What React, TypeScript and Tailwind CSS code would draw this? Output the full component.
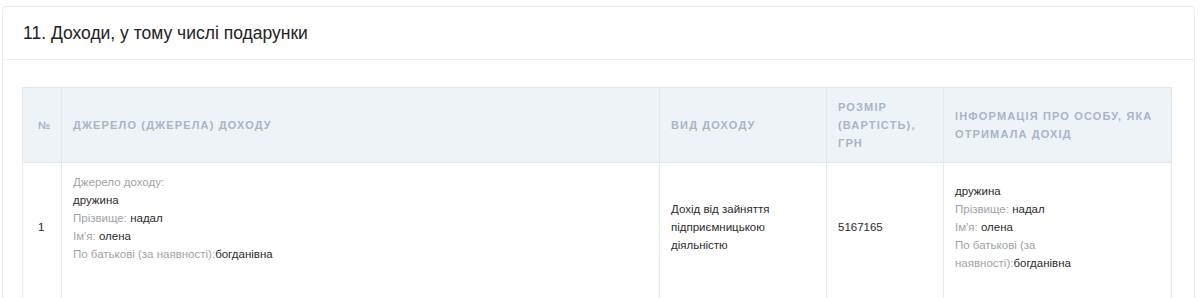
import React from 'react'

const font = { fontFamily: '"Liberation Sans", Arial, sans-serif' }

const Label = ({ children }: { children: React.ReactNode }) => (
    <span className="text-[#9ea3a8]">{children}</span>
)

const Value = ({ children }: { children: React.ReactNode }) => (
    <span className="text-[#2b2b2b]">{children}</span>
)

const headCls = 'px-[11px] py-[10px] text-left align-middle font-bold uppercase text-[11px] leading-[18px] tracking-[1.15px] text-[#a9b5c6] border-l border-[#e1e7ee]'
const cellCls = 'px-[11px] pt-[10px] pb-[30px] align-middle text-[11.5px] leading-[18px] text-[#2b2b2b] border-l border-[#e6eaef]'

const App = () => {
    return (
        <div className="bg-white w-[1200px] h-[298px] overflow-hidden pt-[6px] pl-[2px] pr-[5px]" style={font}>
            <div className="border border-[#ececec] rounded-[4px] bg-white">
                <div className="h-[53px] flex items-center pl-[20px] border-b border-[#ececec]">
                    <h3 className="text-[17.5px] text-[#222] font-normal">11. Доходи, у тому числі подарунки</h3>
                </div>
                <div className="pt-[27px] pl-[19px] pr-[22px]">
                    <table className="w-full table-fixed border-collapse">
                        <colgroup>
                            <col className="w-[39px]" />
                            <col className="w-[598px]" />
                            <col className="w-[167px]" />
                            <col className="w-[117px]" />
                            <col />
                        </colgroup>
                        <thead>
                            <tr className="bg-[#eef3f8] border border-[#e1e7ee]">
                                <th className="px-0 pl-[15px] py-[10px] text-left align-middle font-bold text-[11px] leading-[18px] text-[#a9b5c6]">№</th>
                                <th className={headCls}>Джерело (джерела) доходу</th>
                                <th className={headCls}>Вид доходу</th>
                                <th className={headCls}>Розмір (вартість), грн</th>
                                <th className={headCls}>Інформація про особу, яка отримала дохід</th>
                            </tr>
                        </thead>
                        <tbody>
                            <tr className="border-x border-[#e6eaef]">
                                <td className="pl-[15px] pt-[10px] pb-[30px] align-middle text-[11.5px] leading-[18px] text-[#2b2b2b]">1</td>
                                <td className={cellCls}>
                                    <div><Label>Джерело доходу:</Label></div>
                                    <div><Value>дружина</Value></div>
                                    <div><Label>Прізвище: </Label><Value>надал</Value></div>
                                    <div><Label>Ім'я: </Label><Value>олена</Value></div>
                                    <div><Label>По батькові (за наявності):</Label><Value>богданівна</Value></div>
                                    <div className="h-[18px]" />
                                </td>
                                <td className={cellCls}>Дохід від зайняття підприємницькою діяльністю</td>
                                <td className={cellCls}>5167165</td>
                                <td className={cellCls}>
                                    <div className="max-w-[190px]">
                                        <div><Value>дружина</Value></div>
                                        <div><Label>Прізвище: </Label><Value>надал</Value></div>
                                        <div><Label>Ім'я: </Label><Value>олена</Value></div>
                                        <div><Label>По батькові (за наявності):</Label><Value>богданівна</Value></div>
                                    </div>
                                </td>
                            </tr>
                        </tbody>
                    </table>
                </div>
            </div>
        </div>
    )
}

export default App
